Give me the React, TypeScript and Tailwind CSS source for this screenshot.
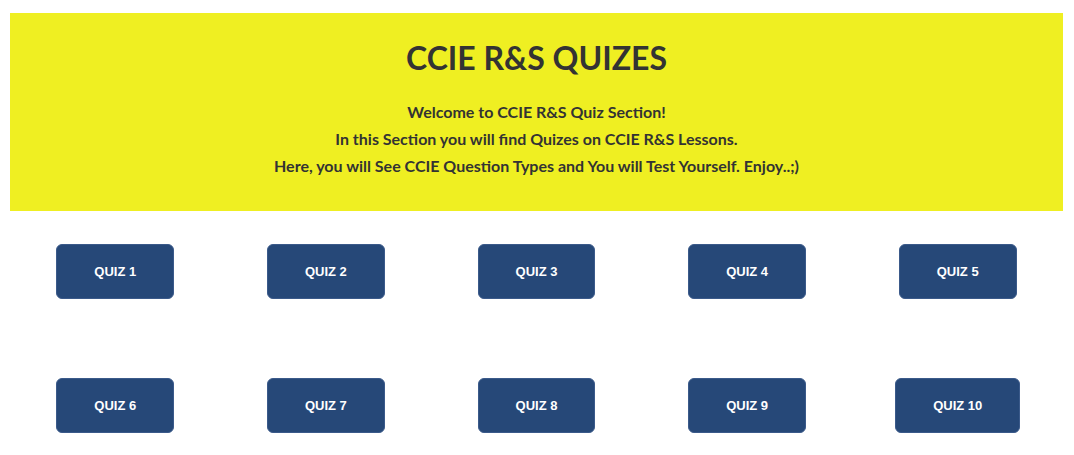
const quizzes = Array.from({ length: 10 }, (_, i) => `QUIZ ${i + 1}`);

export default function App() {
  return (
    <div className="min-h-[455px] bg-white pt-[13px] px-[10px] pr-[11px]">
      <header
        className="bg-[#efef22] h-[198px] flex flex-col items-center pt-[26px] text-[#333333] text-center"
        style={{ fontFamily: "Lato, 'Open Sans', sans-serif" }}
      >
        <h1 className="text-[32px] leading-[38px] font-bold">CCIE R&amp;S QUIZES</h1>
        <div className="mt-[21px] text-[16px] leading-[27px] font-bold">
          <p>Welcome to CCIE R&amp;S Quiz Section!</p>
          <p>In this Section you will find Quizes on CCIE R&amp;S Lessons.</p>
          <p>Here, you will See CCIE Question Types and You will Test Yourself. Enjoy..;)</p>
        </div>
      </header>
      <div className="grid grid-cols-5 gap-y-[79px] pt-[33px]">
        {quizzes.map((q) => (
          <div key={q} className="flex justify-center">
            <button
              className="h-[55px] px-[37px] rounded-[6px] bg-[#264878] text-white text-[13px] font-bold border border-[#3b5a8a]"
              style={{ fontFamily: "'Liberation Sans', Arial, sans-serif" }}
            >
              {q}
            </button>
          </div>
        ))}
      </div>
    </div>
  );
}
